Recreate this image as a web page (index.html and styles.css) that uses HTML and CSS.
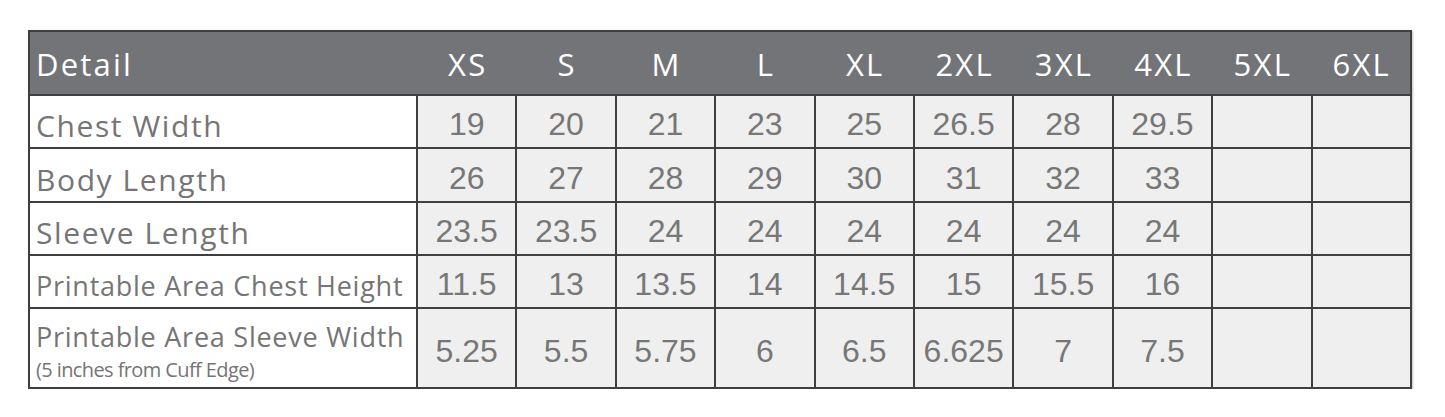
FILE: index.html
```html
<!DOCTYPE html>
<html>
<head>
<meta charset="utf-8">
<link rel="stylesheet" href="styles.css">
</head>
<body>
<div class="wrap">
<table class="sizes">
<colgroup>
<col class="c-label">
<col class="c-size"><col class="c-size"><col class="c-size"><col class="c-size"><col class="c-size">
<col class="c-size"><col class="c-size"><col class="c-size"><col class="c-size"><col class="c-size">
</colgroup>
<thead>
<tr class="head">
<th class="label">Detail</th>
<th>XS</th><th>S</th><th>M</th><th>L</th><th>XL</th><th>2XL</th><th>3XL</th><th>4XL</th><th>5XL</th><th>6XL</th>
</tr>
</thead>
<tbody>
<tr class="r1">
<td class="label">Chest Width</td>
<td>19</td><td>20</td><td>21</td><td>23</td><td>25</td><td>26.5</td><td>28</td><td>29.5</td><td></td><td></td>
</tr>
<tr class="r2">
<td class="label">Body Length</td>
<td>26</td><td>27</td><td>28</td><td>29</td><td>30</td><td>31</td><td>32</td><td>33</td><td></td><td></td>
</tr>
<tr class="r3">
<td class="label">Sleeve Length</td>
<td>23.5</td><td>23.5</td><td>24</td><td>24</td><td>24</td><td>24</td><td>24</td><td>24</td><td></td><td></td>
</tr>
<tr class="r4">
<td class="label small">Printable Area Chest Height</td>
<td>11.5</td><td>13</td><td>13.5</td><td>14</td><td>14.5</td><td>15</td><td>15.5</td><td>16</td><td></td><td></td>
</tr>
<tr class="r5">
<td class="label small"><span class="main">Printable Area Sleeve Width</span><span class="note">(5 inches from Cuff Edge)</span></td>
<td>5.25</td><td>5.5</td><td>5.75</td><td>6</td><td>6.5</td><td>6.625</td><td>7</td><td>7.5</td><td></td><td></td>
</tr>
</tbody>
</table>
</div>
</body>
</html>
```
FILE: styles.css
```css
html, body {
  margin: 0;
  padding: 0;
  background: #ffffff;
}
.wrap {
  padding: 30px 0 0 28px;
}
.sizes {
  border-collapse: collapse;
  table-layout: fixed;
  width: 1382px;
  border: 2px solid #3f3f3f;
  box-shadow: 1px 1px 2px rgba(0,0,0,0.25);
}
.c-label { width: 388px; }
.c-size { width: 99.4px; }
.head {
  background: #737478;
  height: 64px;
}
.head th {
  color: #ffffff;
  font-family: "Open Sans", sans-serif;
  font-weight: 400;
  font-size: 31px;
  letter-spacing: 2.2px;
  text-align: center;
  padding: 2px 0 0 2px;
  vertical-align: middle;
  border: none;
  border-bottom: 2px solid #3f3f3f;
}
.head th.label {
  text-align: left;
  padding-left: 6px;
}
td {
  border: 2px solid #3f3f3f;
  background: #efefef;
  color: #777777;
  font-family: "Liberation Sans", Arial, sans-serif;
  font-size: 32px;
  text-align: center;
  vertical-align: middle;
  padding: 6px 0 0 0;
  white-space: nowrap;
}
td.label {
  background: #ffffff;
  text-align: left;
  font-family: "Open Sans", sans-serif;
  font-size: 30px;
  letter-spacing: 1.6px;
  padding: 8px 0 0 6px;
  color: #757575;
}
td.label.small {
  font-size: 27px;
  letter-spacing: 0.75px;
}
.r1 { height: 53px; }
.r2 { height: 54px; }
.r3 { height: 53px; }
.r4 { height: 53px; }
.r5 { height: 80px; }
.r5 td.label {
  padding-top: 8px;
}
.main {
  display: block;
  line-height: 30px;
}
.note {
  display: block;
  font-size: 20px;
  letter-spacing: -0.6px;
  line-height: 24px;
  margin-top: 6px;
}
```
